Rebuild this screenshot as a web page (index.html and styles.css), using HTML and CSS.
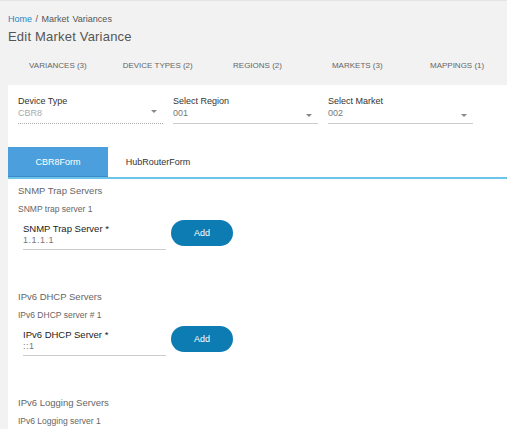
FILE: index.html
```html
<!DOCTYPE html>
<html lang="en">
<head>
  <meta charset="UTF-8">
  <title>Edit Market Variance</title>
  <link rel="stylesheet" href="styles.css">
</head>
<body>
  <div class="page">
    <div class="breadcrumb"><a href="#">Home</a> / Market Variances</div>
    <h1 class="title">Edit Market Variance</h1>

    <div class="nav">
      <div class="nav-item">VARIANCES (3)</div>
      <div class="nav-item">DEVICE TYPES (2)</div>
      <div class="nav-item">REGIONS (2)</div>
      <div class="nav-item">MARKETS (3)</div>
      <div class="nav-item">MAPPINGS (1)</div>
    </div>

    <div class="card">
      <div class="selects">
        <div class="select disabled">
          <div class="select-label">Device Type</div>
          <div class="select-value">CBR8</div>
          <span class="caret"></span>
        </div>
        <div class="select">
          <div class="select-label">Select Region</div>
          <div class="select-value">001</div>
          <span class="caret"></span>
        </div>
        <div class="select">
          <div class="select-label">Select Market</div>
          <div class="select-value">002</div>
          <span class="caret"></span>
        </div>
      </div>

      <div class="form-tabs">
        <div class="form-tab active">CBR8Form</div>
        <div class="form-tab">HubRouterForm</div>
      </div>

      <div class="section">
        <div class="section-title">SNMP Trap Servers</div>
        <div class="section-sub">SNMP trap server 1</div>
        <div class="field-row">
          <div class="field">
            <div class="field-label">SNMP Trap Server *</div>
            <div class="field-value">1.1.1.1</div>
          </div>
          <button class="btn-add">Add</button>
        </div>
      </div>

      <div class="section">
        <div class="section-title">IPv6 DHCP Servers</div>
        <div class="section-sub">IPv6 DHCP server # 1</div>
        <div class="field-row">
          <div class="field">
            <div class="field-label">IPv6 DHCP Server *</div>
            <div class="field-value">::1</div>
          </div>
          <button class="btn-add">Add</button>
        </div>
      </div>

      <div class="section">
        <div class="section-title">IPv6 Logging Servers</div>
        <div class="section-sub">IPv6 Logging server 1</div>
      </div>
    </div>
  </div>
</body>
</html>
```

FILE: styles.css
```css
body {
  margin: 0;
  font-family: "Liberation Sans", Arial, sans-serif;
  background-color: #f2f2f2;
  color: #555;
  overflow: hidden;
}

.page {
  border-top: 1px solid #e4e4e4;
  padding-left: 8px;
  height: 428px;
  overflow: hidden;
}

.breadcrumb {
  font-size: 9px;
  color: #555;
  padding-top: 12px;
  line-height: 12px;
  word-spacing: 1px;
}

.breadcrumb a {
  color: #1b87c5;
  text-decoration: none;
}

.title {
  font-size: 13px;
  font-weight: normal;
  color: #555;
  margin: 3px 0 0;
  line-height: 17px;
  letter-spacing: 0.2px;
}

.nav {
  display: flex;
  margin-top: 7px;
  height: 26px;
  align-items: center;
}

.nav-item {
  width: 100px;
  text-align: center;
  font-size: 8px;
  color: #666;
}

.card {
  background-color: #fff;
  margin-top: 7px;
  height: 400px;
}

.selects {
  display: flex;
  padding: 9px 0 0 10px;
}

.select {
  position: relative;
  width: 145px;
  margin-right: 10px;
  border-bottom: 1px solid #ccc;
  height: 29px;
}

.select.disabled {
  border-bottom: 1px dotted #aaa;
}

.select-label {
  font-size: 9px;
  color: #333;
  line-height: 12px;
  padding-top: 1px;
}

.select-value {
  font-size: 9px;
  color: #777;
  line-height: 12px;
}

.select.disabled .select-value {
  color: #aaa;
}

.caret {
  position: absolute;
  right: 6px;
  top: 20px;
  border-left: 3px solid transparent;
  border-right: 3px solid transparent;
  border-top: 3px solid #888;
}

.select.disabled .caret {
  top: 16px;
}

.form-tabs {
  display: flex;
  margin-top: 23px;
  height: 30px;
  border-bottom: 2px solid #6cc4ea;
}

.form-tab {
  width: 100px;
  display: flex;
  align-items: center;
  justify-content: center;
  font-size: 9px;
  color: #333;
}

.form-tab.active {
  background-color: #4b9fdc;
  color: #fff;
  border-bottom: 1px solid #3d8cc7;
}

.section {
  padding: 6px 0 0 10px;
}

.section + .section {
  margin-top: 35px;
}

.section-title {
  font-size: 9.5px;
  color: #666;
  line-height: 12px;
}

.section-sub {
  font-size: 8.5px;
  color: #666;
  margin-top: 6px;
  line-height: 12px;
}

.field-row {
  display: flex;
  align-items: flex-start;
  padding-left: 5px;
  margin-top: 5px;
}

.field {
  width: 143px;
  border-bottom: 1px solid #ccc;
  height: 29px;
}

.field-label {
  font-size: 9.5px;
  color: #222;
  line-height: 12px;
  padding-top: 3px;
}

.field-value {
  font-size: 9px;
  color: #777;
  line-height: 11px;
  letter-spacing: 0.5px;
}

.btn-add {
  margin-left: 5px;
  width: 62px;
  height: 26px;
  border: none;
  border-radius: 13px;
  background-color: #0d7cb3;
  color: #fff;
  font-family: "Liberation Sans", Arial, sans-serif;
  font-size: 9px;
  cursor: pointer;
}
```
